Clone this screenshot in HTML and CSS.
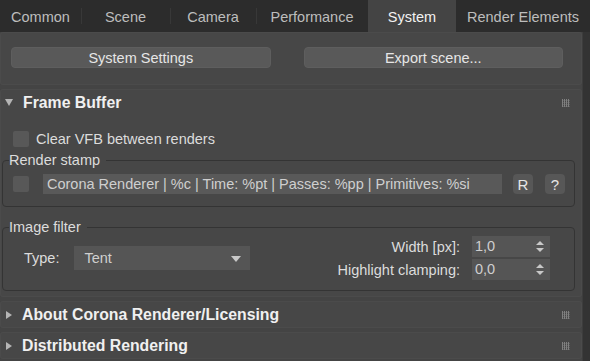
FILE: index.html
```html
<!DOCTYPE html>
<html lang="en">
<head>
    <meta charset="UTF-8">
    <title>Corona Render Setup - System</title>
    <link rel="stylesheet" href="styles.css">
</head>
<body>

    <!-- Tabs -->
    <div class="tabs">
        <div class="tab tab-common">Common</div>
        <div class="tab tab-scene">Scene</div>
        <div class="tab tab-camera">Camera</div>
        <div class="tab tab-perf">Performance</div>
        <div class="tab tab-system active">System</div>
        <div class="tab tab-elements">Render Elements</div>
    </div>

    <div class="main">
        <div class="panel">

            <!-- top buttons -->
            <div class="rollout button-rollout">
                <button class="wide-btn">System Settings</button>
                <button class="wide-btn">Export scene...</button>
            </div>

            <!-- Frame Buffer -->
            <div class="rollout">
                <div class="rollout-head">
                    <span class="arrow open"></span>
                    <span class="rollout-title">Frame Buffer</span>
                    <span class="grip"></span>
                </div>
                <div class="rollout-body">
                    <label class="check-row">
                        <span class="checkbox"></span>
                        Clear VFB between renders
                    </label>

                    <fieldset class="group stamp-group">
                        <legend>Render stamp</legend>
                        <div class="stamp-row">
                            <span class="checkbox"></span>
                            <div class="stamp-field">Corona Renderer | %c | Time: %pt | Passes: %pp | Primitives: %si</div>
                            <button class="small-btn">R</button>
                            <button class="small-btn">?</button>
                        </div>
                    </fieldset>

                    <fieldset class="group filter-group">
                        <legend>Image filter</legend>
                        <div class="filter-row">
                            <div class="type-col">
                                <span class="label">Type:</span>
                                <div class="dropdown">Tent<span class="drop-arrow"></span></div>
                            </div>
                            <div class="spin-grid">
                                <span class="label">Width [px]:</span>
                                <div class="spinner">1,0<span class="spin-arrows"></span></div>
                                <span class="label">Highlight clamping:</span>
                                <div class="spinner">0,0<span class="spin-arrows"></span></div>
                            </div>
                        </div>
                    </fieldset>
                </div>
            </div>

            <!-- collapsed rollouts -->
            <div class="rollout">
                <div class="rollout-head">
                    <span class="arrow"></span>
                    <span class="rollout-title">About Corona Renderer/Licensing</span>
                    <span class="grip"></span>
                </div>
            </div>

            <div class="rollout">
                <div class="rollout-head">
                    <span class="arrow"></span>
                    <span class="rollout-title">Distributed Rendering</span>
                    <span class="grip"></span>
                </div>
            </div>

        </div>
        <div class="scrollbar"></div>
    </div>

</body>
</html>
```

FILE: styles.css
```css
body {
    margin: 0;
    background-color: #3a3a3a;
    font-family: "Liberation Sans", Arial, sans-serif;
    font-size: 14.5px;
    color: #dcdcdc;
    width: 590px;
    height: 361px;
    overflow: hidden;
}

/* tab bar */
.tabs {
    display: flex;
    height: 32px;
    background-color: #2c2c2c;
}

.tab {
    display: flex;
    align-items: center;
    justify-content: center;
    padding-top: 2px;
    color: #bdbdbd;
    position: relative;
}

.tab + .tab::before {
    content: "";
    position: absolute;
    left: 0;
    top: 8px;
    height: 16px;
    border-left: 1px solid #383838;
}

.tab.active::before,
.tab.active + .tab::before {
    display: none;
}

.tab-common { width: 81px; }
.tab-scene { width: 89px; }
.tab-camera { width: 86px; }
.tab-perf { width: 112px; }
.tab-system { width: 88px; }
.tab-elements { width: 134px; }

.tab.active {
    background-color: #444444;
    color: #f2f2f2;
}

.main {
    display: flex;
    height: 329px;
    background-color: #444444;
}

.panel {
    width: 583px;
    display: flex;
    flex-direction: column;
    gap: 4px;
}

.scrollbar {
    width: 7px;
    background-color: #333333;
    border-left: 1px solid #3d3d3d;
}

/* rollouts */
.rollout {
    background-color: #474747;
    border-radius: 3px;
    box-shadow: inset 0 0 0 1px #4b4b4b;
}

.button-rollout {
    display: flex;
    gap: 33px;
    padding: 15px 19px 17px 11px;
    height: 21px;
}

.wide-btn {
    flex: 1;
    height: 21px;
    border: 1px solid #5e5e5e;
    border-radius: 4px;
    background-color: #595959;
    color: #e6e6e6;
    font-family: inherit;
    font-size: 14.5px;
    padding: 0;
}

.rollout-head {
    display: flex;
    align-items: center;
    height: 27px;
    padding-left: 5px;
}

.arrow {
    width: 0;
    height: 0;
    margin-right: 10px;
    border-top: 4px solid transparent;
    border-bottom: 4px solid transparent;
    border-left: 6px solid #b4b4b4;
    margin-left: 1px;
}

.arrow.open {
    border-left: 4px solid transparent;
    border-right: 4px solid transparent;
    border-top: 7px solid #b4b4b4;
    border-bottom: none;
    margin-left: 0;
}

.rollout-title {
    font-weight: bold;
    font-size: 15.8px;
    color: #f0f0f0;
    flex: 1;
}

.grip {
    width: 8px;
    height: 8px;
    margin-right: 12px;
    background-image:
        repeating-linear-gradient(90deg, #808080 0 1px, transparent 1px 2px),
        repeating-linear-gradient(0deg, #5e5e5e 0 1px, transparent 1px 2px);
}

.rollout-body {
    padding: 14px 7px 6px 2px;
}

.check-row {
    display: flex;
    align-items: center;
    gap: 7px;
    padding-left: 11px;
    height: 18px;
}

.checkbox {
    width: 16px;
    height: 16px;
    background-color: #585858;
    border-radius: 2px;
    flex: none;
}

/* group boxes */
.group {
    margin: 4px 0 0 0;
    padding: 0 0 0 10px;
    border: 1px solid #343434;
    border-radius: 4px;
}

.group legend {
    padding: 0 6px 0 0;
    margin-left: -4px;
    line-height: 16px;
}

.stamp-row {
    display: flex;
    align-items: center;
    height: 20px;
    padding: 6px 8px 12px 0;
}

.stamp-row .checkbox {
    margin-right: 14px;
}

.stamp-field {
    width: 455px;
    height: 20px;
    line-height: 20px;
    padding-left: 4px;
    background-color: #595959;
    color: #cfcfcf;
    white-space: nowrap;
    overflow: hidden;
    margin-right: 11px;
}

.small-btn {
    width: 20px;
    height: 20px;
    margin-right: 12px;
    padding: 0;
    border: none;
    border-radius: 4px;
    background-color: #575757;
    color: #e6e6e6;
    font-family: inherit;
    font-size: 15px;
}

.small-btn:last-child {
    margin-right: 0;
}

.filter-group {
    margin-top: 12px;
}

.filter-row {
    display: flex;
    align-items: center;
    justify-content: space-between;
    padding: 1px 24px 10px 11px;
}

.type-col {
    display: flex;
    align-items: center;
    gap: 15px;
}

.dropdown {
    width: 166px;
    height: 24px;
    line-height: 24px;
    padding-left: 10px;
    background-color: #555555;
    color: #cfcfcf;
    position: relative;
}

.drop-arrow {
    position: absolute;
    right: 9px;
    top: 10px;
    border-left: 5px solid transparent;
    border-right: 5px solid transparent;
    border-top: 6px solid #c8c8c8;
}

.spin-grid {
    display: grid;
    grid-template-columns: auto 78px;
    column-gap: 12px;
    row-gap: 2px;
    align-items: center;
}

.spin-grid .label {
    text-align: right;
}

.spinner {
    height: 21px;
    line-height: 21px;
    padding-left: 3px;
    background-color: #555555;
    color: #cfcfcf;
    position: relative;
}

.spin-arrows {
    position: absolute;
    right: 6px;
    top: 5px;
    width: 8px;
    height: 11px;
}

.spin-arrows::before,
.spin-arrows::after {
    content: "";
    position: absolute;
    left: 0;
    border-left: 4px solid transparent;
    border-right: 4px solid transparent;
}

.spin-arrows::before {
    top: 0;
    border-bottom: 4px solid #c8c8c8;
}

.spin-arrows::after {
    bottom: 0;
    border-top: 4px solid #c8c8c8;
}
```
